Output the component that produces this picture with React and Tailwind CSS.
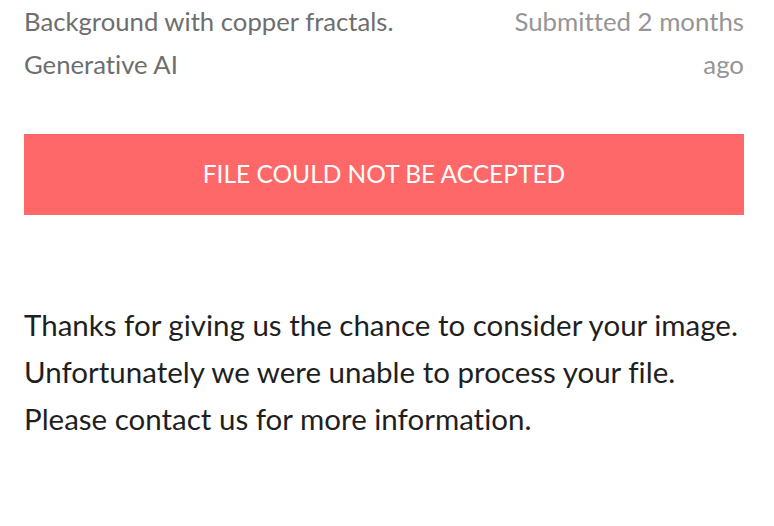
export default function App() {
  return (
    <div className="min-h-screen bg-white pl-6 pr-[30px] font-['Lato','Noto_Sans',sans-serif] [font-variant-ligatures:none]">
      <div className="flex justify-between gap-6 leading-[43px]">
        <div className="text-[25.7px] text-[#6e6e6e]">
          <div>Background with copper fractals.</div>
          <div>Generative AI</div>
        </div>
        <div className="w-[250px] text-right text-[25.8px] text-[#959595]">
          Submitted 2 months ago
        </div>
      </div>

      <div className="mt-[48px] flex h-[81px] items-center justify-center bg-[#ff6868] text-[24.5px] text-white">
        FILE COULD NOT BE ACCEPTED
      </div>

      <p className="mt-[86px] text-[29.5px] leading-[47px] text-[#1f1f1f]">
        Thanks for giving us the chance to consider your image.
        <br />
        Unfortunately we were unable to process your file.
        <br />
        Please contact us for more information.
      </p>
    </div>
  );
}
